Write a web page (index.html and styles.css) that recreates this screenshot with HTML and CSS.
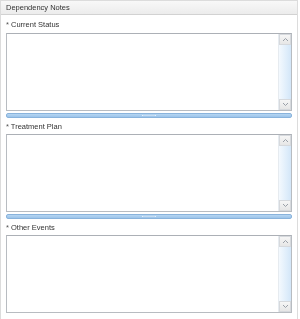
FILE: index.html
```html
<!DOCTYPE html>
<html>
<head>
<meta charset="utf-8">
<link rel="stylesheet" href="styles.css">
</head>
<body>
<div class="panel">
  <div class="header">Dependency Notes</div>
  <div class="content">
    <div class="field first">
      <div class="label"><span class="req">*</span> Current Status</div>
      <div class="box"><div class="sb"><div class="btn up"><svg width="7" height="5" viewBox="0 0 7 5"><path d="M1 4 L3.5 1.5 L6 4" fill="none" stroke="#9aa0a8" stroke-width="1"/></svg></div><div class="track"></div><div class="btn down"><svg width="7" height="5" viewBox="0 0 7 5"><path d="M1 1 L3.5 3.5 L6 1" fill="none" stroke="#9aa0a8" stroke-width="1"/></svg></div></div></div>
    </div>
    <div class="splitter"><span class="grip"></span></div>
    <div class="field">
      <div class="label"><span class="req">*</span> Treatment Plan</div>
      <div class="box"><div class="sb"><div class="btn up"><svg width="7" height="5" viewBox="0 0 7 5"><path d="M1 4 L3.5 1.5 L6 4" fill="none" stroke="#9aa0a8" stroke-width="1"/></svg></div><div class="track"></div><div class="btn down"><svg width="7" height="5" viewBox="0 0 7 5"><path d="M1 1 L3.5 3.5 L6 1" fill="none" stroke="#9aa0a8" stroke-width="1"/></svg></div></div></div>
    </div>
    <div class="splitter"><span class="grip"></span></div>
    <div class="field">
      <div class="label"><span class="req">*</span> Other Events</div>
      <div class="box"><div class="sb"><div class="btn up"><svg width="7" height="5" viewBox="0 0 7 5"><path d="M1 4 L3.5 1.5 L6 4" fill="none" stroke="#9aa0a8" stroke-width="1"/></svg></div><div class="track"></div><div class="btn down"><svg width="7" height="5" viewBox="0 0 7 5"><path d="M1 1 L3.5 3.5 L6 1" fill="none" stroke="#9aa0a8" stroke-width="1"/></svg></div></div></div>
    </div>
  </div>
</div>
</body>
</html>
```
FILE: styles.css
```css
html, body {
  margin: 0;
  padding: 0;
  background: #ffffff;
}
.panel {
  width: 298px;
  height: 319px;
  box-sizing: border-box;
  border: 1px solid #dcdcdc;
  border-bottom: none;
  font-family: "Liberation Sans", Arial, sans-serif;
  font-size: 7.5px;
  color: #2b2b2b;
  display: flex;
  flex-direction: column;
  will-change: transform;
  background: #fff;
}
.header {
  height: 13px;
  line-height: 13px;
  padding-left: 5px;
  background: linear-gradient(#f8f8f8, #ececec);
  border-bottom: 1px solid #d2d2d2;
  color: #333;
}
.content {
  padding: 2px 5px 0 5px;
  display: flex;
  flex-direction: column;
}
.field {
  display: flex;
  flex-direction: column;
}
.label {
  height: 15px;
  line-height: 15px;
  padding-left: 0;
  color: #333;
}
.first .label {
  height: 16px;
  line-height: 16px;
}
.req {
  color: #555;
}
.box {
  height: 76px;
  border: 1px solid #b8bcc1;
  border-top-color: #acb0b6;
  background: #fff;
  display: flex;
  justify-content: flex-end;
}
.sb {
  width: 12px;
  display: flex;
  flex-direction: column;
  background: linear-gradient(90deg, #f4f9fe, #e0eefb 60%, #d3e6f8);
  border-left: 1px solid #e6ebf0;
}
.btn {
  height: 11px;
  display: flex;
  align-items: center;
  justify-content: center;
  background: linear-gradient(#f6f6f6, #e6e6e6);
  border: 1px solid #d6d9dd;
  box-sizing: border-box;
}
.track {
  flex: 1;
}
.splitter {
  margin: 2px 0 1px 0;
  height: 5px;
  box-sizing: border-box;
  background: linear-gradient(#b6d6f2, #9cc4ea);
  border: 1px solid #89b3dc;
  border-radius: 2px;
  display: flex;
  justify-content: center;
  align-items: center;
}
.grip {
  width: 12px;
  height: 1px;
  border-left: 1px solid #e6f1fb;
  border-right: 1px solid #e6f1fb;
  background: #c5dcf2;
}
```
